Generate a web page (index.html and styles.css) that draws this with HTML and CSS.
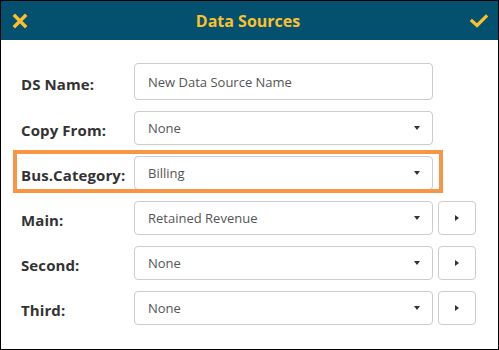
FILE: index.html
```html
<!DOCTYPE html>
<html lang="en">
<head>
    <meta charset="UTF-8">
    <title>Data Sources</title>
    <link rel="stylesheet" href="styles.css">
</head>
<body>
<div class="dialog">
    <div class="header">
        <svg class="icon" width="16" height="16" viewBox="0 0 16 16">
            <path d="M3 3 L13 13 M13 3 L3 13" stroke="#fbc02d" stroke-width="3.4" stroke-linecap="square"/>
        </svg>
        <h1>Data Sources</h1>
        <svg class="icon" width="18" height="14" viewBox="0 0 18 14">
            <path d="M2 7 L7 11.5 L16 2.5" stroke="#fbc02d" stroke-width="3.2" fill="none" stroke-linecap="square"/>
        </svg>
    </div>
    <div class="form">
        <div class="row first">
            <label>DS Name:</label>
            <div class="field">New Data Source Name</div>
        </div>
        <div class="row">
            <label>Copy From:</label>
            <div class="field select">None<span class="caret"></span></div>
        </div>
        <div class="row marked">
            <label>Bus.Category:</label>
            <div class="field select">Billing<span class="caret"></span></div>
        </div>
        <div class="row">
            <label>Main:</label>
            <div class="field select">Retained Revenue<span class="caret"></span></div>
            <div class="btn"><span class="arrow"></span></div>
        </div>
        <div class="row">
            <label>Second:</label>
            <div class="field select">None<span class="caret"></span></div>
            <div class="btn"><span class="arrow"></span></div>
        </div>
        <div class="row">
            <label>Third:</label>
            <div class="field select">None<span class="caret"></span></div>
            <div class="btn"><span class="arrow"></span></div>
        </div>
    </div>
</div>
</body>
</html>
```

FILE: styles.css
```css
html, body {
    margin: 0;
    padding: 0;
}
body {
    font-family: "Open Sans", Arial, sans-serif;
    background: white;
}
.dialog {
    width: 499px;
    height: 350px;
    box-sizing: border-box;
    border: 1px solid black;
}
.header {
    height: 39px;
    background: #03506f;
    display: flex;
    align-items: center;
    justify-content: space-between;
    padding: 0 10px 0 11px;
}
.header h1 {
    margin: 0;
    color: #fbc02d;
    font-size: 16px;
    font-weight: 700;
    padding-right: 2px;
}
.icon {
    display: block;
}
.form {
    padding: 23px 0 0 20px;
    display: flex;
    flex-direction: column;
    gap: 11px;
}
.row {
    display: flex;
    align-items: center;
    height: 34px;
    position: relative;
}
.row.first {
    height: 37px;
}
.row label {
    width: 113px;
    font-size: 15px;
    font-weight: 700;
    color: #333;
    padding-top: 4px;
    letter-spacing: 0.1px;
}
.field {
    width: 299px;
    height: 100%;
    box-sizing: border-box;
    border: 1px solid #ccc;
    border-radius: 4px;
    padding: 0 13px;
    display: flex;
    align-items: center;
    font-size: 13px;
    color: #555;
    position: relative;
}
.caret {
    position: absolute;
    right: 12px;
    top: 50%;
    margin-top: -2px;
    border-left: 3.5px solid transparent;
    border-right: 3.5px solid transparent;
    border-top: 4px solid #333;
}
.btn {
    width: 38px;
    height: 100%;
    box-sizing: border-box;
    border: 1px solid #ccc;
    border-radius: 4px;
    margin-left: 5px;
    display: flex;
    align-items: center;
    justify-content: center;
}
.arrow {
    border-top: 3.5px solid transparent;
    border-bottom: 3.5px solid transparent;
    border-left: 4px solid #333;
}
.marked::after {
    content: "";
    position: absolute;
    left: -8px;
    top: -6px;
    width: 430px;
    height: 43px;
    box-sizing: border-box;
    border: 4px solid #f79646;
}
```
